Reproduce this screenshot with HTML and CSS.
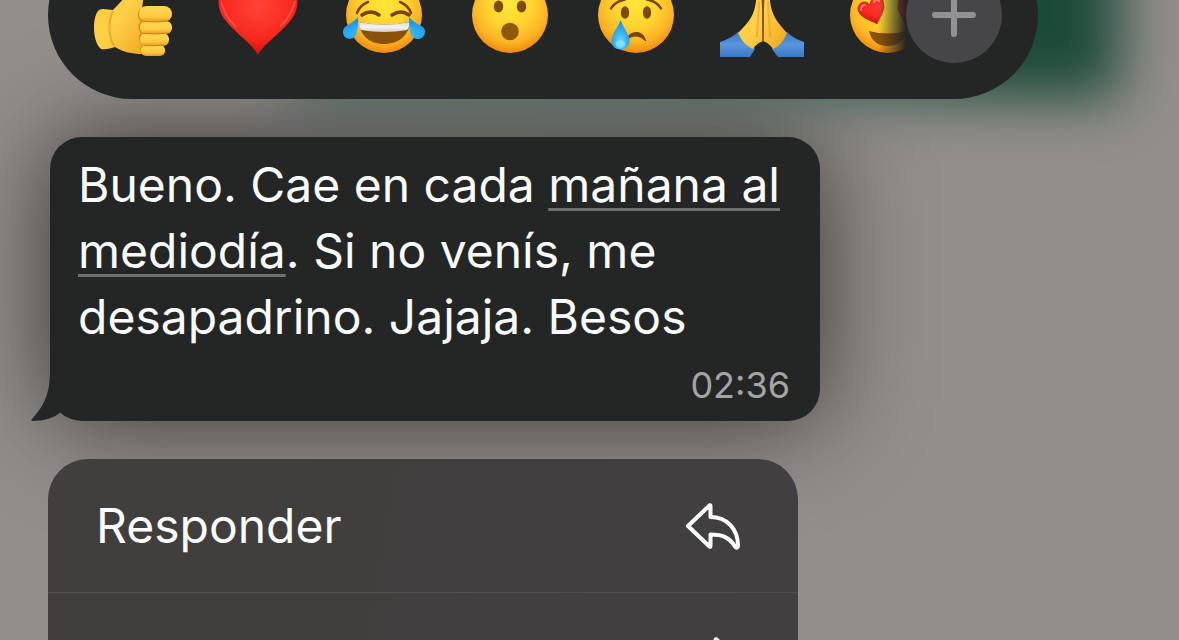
FILE: index.html
```html
<!DOCTYPE html>
<html lang="es">
<head>
<meta charset="utf-8">
<meta name="viewport" content="width=device-width, initial-scale=1">
<title>Mensaje</title>
<link rel="stylesheet" href="styles.css">
</head>
<body>
<svg class="defs" aria-hidden="true">
  <defs>
    <radialGradient id="face" cx="50%" cy="36%" r="64%">
      <stop offset="0" stop-color="#ffe637"/>
      <stop offset=".45" stop-color="#fed430"/>
      <stop offset=".78" stop-color="#fdb325"/>
      <stop offset="1" stop-color="#ee8a0c"/>
    </radialGradient>
    <linearGradient id="skin" x1="0" y1="0" x2="1" y2="1">
      <stop offset="0" stop-color="#ffc930"/>
      <stop offset=".5" stop-color="#ffd04a"/>
      <stop offset="1" stop-color="#f0a51c"/>
    </linearGradient>
    <linearGradient id="finger" x1="0" y1="0" x2="0" y2="1">
      <stop offset="0" stop-color="#ffd85a"/>
      <stop offset=".65" stop-color="#ffcb41"/>
      <stop offset="1" stop-color="#e69b1a"/>
    </linearGradient>
    <radialGradient id="heart" cx="50%" cy="35%" r="62%">
      <stop offset="0" stop-color="#ff4438"/>
      <stop offset=".7" stop-color="#f8291f"/>
      <stop offset="1" stop-color="#d8130f"/>
    </radialGradient>
    <radialGradient id="tear" cx="50%" cy="75%" r="65%">
      <stop offset="0" stop-color="#7fdcff"/>
      <stop offset=".45" stop-color="#3db9f8"/>
      <stop offset="1" stop-color="#1495e8"/>
    </radialGradient>
    <linearGradient id="sleeve" x1="0" y1="0" x2="0" y2="1">
      <stop offset="0" stop-color="#3a76c6"/>
      <stop offset=".5" stop-color="#5896dd"/>
      <stop offset="1" stop-color="#3c78c4"/>
    </linearGradient>
    <linearGradient id="teeth" x1="0" y1="0" x2="0" y2="1">
      <stop offset="0" stop-color="#d9d5d2"/>
      <stop offset=".5" stop-color="#f6f4f4"/>
      <stop offset="1" stop-color="#d5cdc8"/>
    </linearGradient>
  </defs>
</svg>
<main class="screen">
  <div class="backdrop" aria-hidden="true"></div>
  <div class="stack">
    <div class="reactions">
      <div class="emoji-list">
        <button class="emoji" aria-label="Pulgar arriba">
          <svg viewBox="0 0 84 84">
            <path fill="url(#skin)" d="M9 37c-7 6-7 32 2 39 5 1 10-1 14-2 8 5 17 7 27 7l6-28-5-17c-2-5 2-12 2-22 0-9-12-12-14-4-2 11-10 19-18 27-5 0-10-2-14 0z"/>
            <path fill="none" stroke="#d98f17" stroke-width="2" opacity=".55" d="M23 38c-5 9-5 27 2 36"/>
            <path fill="none" stroke="#c27b0c" stroke-width="3" opacity=".65" d="M54 35c-6 3-6 10-1 13-4 3-4 9 0 12-4 3-3 9 1 12-3 3-3 7 0 9"/>
            <rect x="51" y="72" width="24" height="11" rx="5" fill="url(#finger)"/>
            <rect x="50" y="60" width="29" height="13" rx="6" fill="url(#finger)"/>
            <rect x="50" y="48" width="32" height="13" rx="6" fill="url(#finger)"/>
            <rect x="49" y="33" width="33" height="16" rx="8" fill="url(#finger)"/>
            <path stroke="#bb720b" stroke-width="1" opacity=".7" fill="none" d="M53 48.500q13 1.500 25-.5M53 60.500q12 1.500 24-.5M54 72.500q10 1 20-.5"/>
          </svg>
        </button>
        <button class="emoji" aria-label="Corazón">
          <svg viewBox="0 0 84 84">
            <path fill="url(#heart)" d="M42 82C36 70 18 60 7 44-2 30 2 6 22 6c10 0 17 6 20 13C45 12 52 6 62 6c20 0 24 24 15 38C66 60 48 70 42 82z"/>
            <path fill="none" stroke="#ff7066" stroke-width="2" opacity=".5" d="M5 28c2 10 8 19 15 26M79 28c-2 10-8 19-15 26"/>
          </svg>
        </button>
        <button class="emoji" aria-label="Risa con lágrimas">
          <svg viewBox="0 0 84 84">
            <circle cx="42" cy="42" r="38" fill="url(#face)"/>
            <path fill="none" stroke="#7a4304" stroke-width="2.500" stroke-linecap="round" d="M15 40q3-8 11-11M69 40q-3-8-11-11"/>
            <path fill="none" stroke="#7a4304" stroke-width="3.500" stroke-linecap="round" d="M20 42q9-6 17 0M50 42q9-6 17 0"/>
            <path fill="#8a5208" d="M17 49q25 5 51 0c-1 13-11 22-26 22s-24-9-25-22z"/>
            <path fill="url(#teeth)" d="M17 49q25 5 51 0-1 6-3 8-22 4-46 0-2-3-2-8z"/>
            <path fill="url(#tear)" d="M16 44c0 8 1 21-8 22-7 0-9-8-5-12 4-3 9-5 13-10zM67 44c0 8 0 21 8 22 8 0 10-8 6-12-5-3-10-5-14-10z"/>
          </svg>
        </button>
        <button class="emoji" aria-label="Asombro">
          <svg viewBox="0 0 84 84">
            <circle cx="42" cy="42" r="38" fill="url(#face)"/>
            <path fill="none" stroke="#7a4304" stroke-width="2.500" stroke-linecap="round" d="M20 22q4-6 10-6M64 22q-4-6-10-6"/>
            <g fill="#7d4b05">
              <ellipse cx="30.500" cy="33.500" rx="4.700" ry="6"/>
              <ellipse cx="53.500" cy="33.500" rx="4.700" ry="6"/>
            </g>
            <circle cx="42" cy="58.500" r="8.800" fill="#8f5a08"/>
          </svg>
        </button>
        <button class="emoji" aria-label="Tristeza">
          <svg viewBox="0 0 84 84">
            <circle cx="42" cy="42" r="38" fill="url(#face)"/>
            <path fill="none" stroke="#7a4304" stroke-width="2.500" stroke-linecap="round" d="M17 35.500q4-7 14-9M67 35.500q-4-7-14-9"/>
            <g fill="#7d4b05">
              <ellipse cx="31" cy="39.500" rx="4.200" ry="6.200"/>
              <ellipse cx="53" cy="39.500" rx="4.200" ry="6.200"/>
            </g>
            <path fill="#7a4304" d="M34 63c5-6 15-6 18 4 .5 1-.5 1.500-1.500.5-5-5-10-5-16-2z"/>
            <path fill="url(#tear)" d="M26.500 47c2 7 9 14 9 20.500 0 12-18 12-18 0 0-6.500 7-13.500 9-20.500z"/>
            <ellipse cx="26.500" cy="71" rx="5" ry="3.500" fill="#8be0ff" opacity=".8"/>
          </svg>
        </button>
        <button class="emoji" aria-label="Manos juntas">
          <svg viewBox="0 0 84 84">
            <path fill="url(#sleeve)" d="M0 69q10-3 18-10l17 17-5 8H0zM84 69q-10-3-17-10L52 76l6 8h26z"/>
            <path fill="url(#skin)" d="M41 4c-4 0-4 22-6 30-2 10-8 17-17 26 3 7 8 13 15 16 3-4 5-6 10-8zM45 4c4 0 4 22 6 30 2 10 8 17 16 26-3 7-7 13-14 16-3-4-5-6-10-8z"/>
            <path stroke="#8f5504" stroke-width="1.800" fill="none" d="M43 4v64"/>
            <path stroke="#e39a1c" stroke-width="2" fill="none" opacity=".5" d="M39 28c0 14-2 24-2 36M48 28c0 14 2 24 2 36"/>
          </svg>
        </button>
        <button class="emoji" aria-label="Ojos de corazón">
          <svg viewBox="0 0 84 84">
            <circle cx="42" cy="42" r="38" fill="url(#face)"/>
            <path fill="#8a5208" d="M23 58q19 5 38 0c-2 10-9 15-19 15s-17-5-19-15z"/>
            <path fill="url(#heart)" stroke="#c8201a" stroke-width=".8" d="M31 51C25 47 13 45 12 36c0-8 9-9 12-4 0-8 10-12 13-4 3 9-3 15-6 23zM59 51c6-4 18-6 19-15 0-8-9-9-12-4 0-8-10-12-13-4-3 9 3 15 6 23z"/>
            <path fill="none" stroke="#ff938c" stroke-width="2" stroke-linecap="round" opacity=".8" d="M15 37q0-5 4-5M28 29q2-4 5-1"/>
          </svg>
        </button>
      </div>
      <button class="add" aria-label="Más reacciones">
        <svg viewBox="0 0 48 48"><path d="M24 5v38M5 24h38"/></svg>
      </button>
    </div>

    <article class="bubble">
      <svg class="tail" viewBox="0 0 32 52" aria-hidden="true"><path d="M20 0c0 20-3 34-18 50-1 1-1 2 0 2 12 0 22-3 29-9L32 0z"/></svg>
      <p class="message">Bueno. Cae en cada <a class="date" href="#">mañana al mediodía</a>. Si no venís, me desapadrino. Jajaja. Besos</p>
      <time class="time">02:36</time>
    </article>

    <div class="menu">
      <button class="menu-item">
        <span>Responder</span>
        <svg class="menu-icon" viewBox="0 0 56 50" aria-hidden="true"><path d="M24.500 4.500 3 25l21.500 20.500q1 1 1-1V33.500c12 0 19 3 24.500 12 1.500 2 3 1.500 3-1C53 28 42 16 25.500 16V5.500q0-2-1-1z"/></svg>
      </button>
      <button class="menu-item" aria-label="Reenviar">
        <svg class="menu-icon flipped" viewBox="0 0 56 50" aria-hidden="true"><path d="M24.500 4.500 3 25l21.500 20.500q1 1 1-1V33.500c12 0 19 3 24.500 12 1.500 2 3 1.500 3-1C53 28 42 16 25.500 16V5.500q0-2-1-1z"/></svg>
      </button>
    </div>
  </div>
</main>
</body>
</html>
```
FILE: styles.css
```css
* {
  box-sizing: border-box;
}

body {
  margin: 0;
  font-family: Inter, "Liberation Sans", sans-serif;
  font-size: 48px;
  color: #fafcfb;
  background: #928e8b;
}

button {
  margin: 0;
  padding: 0;
  border: 0;
  background: none;
  color: inherit;
  font: inherit;
}

.defs {
  position: absolute;
  width: 0;
  height: 0;
}

.screen {
  position: relative;
  height: 100vh;
  overflow: hidden;
  background: #928e8b;
}

/* Blurred chat content behind the overlay */
.backdrop {
  position: absolute;
  top: -160px;
  left: 25%;
  right: 5%;
  height: 258px;
  background: linear-gradient(90deg, #4b6e60, #44695b 60%, #1c4a38 85%);
  filter: blur(28px);
}

.stack {
  position: relative;
  display: flex;
  flex-direction: column;
  align-items: flex-start;
  gap: 38px;
  margin-top: -69px;
  padding: 0 48px;
}

.reactions {
  position: relative;
  z-index: 1;
  display: flex;
  align-items: center;
  width: 100%;
  max-width: 990px;
  height: 168px;
  padding-right: 36px;
  border-radius: 84px;
  background: #242625;
}

.emoji-list {
  display: flex;
  flex: 1;
  gap: 42px;
  min-width: 0;
  padding-left: 42px;
  overflow: hidden;
  mask-image: linear-gradient(90deg, #000 calc(100% - 28px), transparent);
}

.emoji {
  flex: none;
  width: 84px;
  height: 84px;
}

.emoji svg,
.add svg {
  display: block;
  width: 100%;
}

.add {
  flex: none;
  width: 96px;
  height: 96px;
  padding: 24px;
  border-radius: 50%;
  background: #464648;
}

.add path {
  fill: none;
  stroke: #929194;
  stroke-width: 6;
  stroke-linecap: round;
}

.bubble {
  position: relative;
  display: flex;
  flex-direction: column;
  gap: 14px;
  max-width: 770px;
  margin-left: 2px;
  padding: 15px 30px 15px 28px;
  border-radius: 32px;
  background: #242625;
  box-shadow: 0 0 100px rgba(0, 0, 0, 0.62);
}

.tail {
  position: absolute;
  bottom: 0;
  left: -20px;
  width: 32px;
  height: 52px;
  fill: #242625;
}

.message {
  margin: 0;
  line-height: 66px;
}

.date {
  color: inherit;
  text-decoration: underline;
  text-decoration-color: #6e706f;
  text-decoration-thickness: 3px;
  text-decoration-skip-ink: none;
  text-underline-offset: 6px;
}

.time {
  align-self: flex-end;
  font-size: 36px;
  line-height: 42px;
  color: #a3a4a4;
}

.menu {
  position: relative;
  width: 100%;
  max-width: 750px;
  overflow: hidden;
  border-radius: 40px;
  background: linear-gradient(100deg, #403f3d, #413f40);
}

.menu-item {
  display: flex;
  align-items: center;
  justify-content: space-between;
  width: 100%;
  height: 134px;
  padding: 0 57px 0 48px;
  border-bottom: 1px solid #525150;
}

.menu-icon {
  width: 56px;
  height: 50px;
  margin-left: auto;
  fill: none;
  stroke: #fff;
  stroke-width: 4;
  stroke-linejoin: round;
}

.flipped {
  transform: scaleX(-1);
}
```
